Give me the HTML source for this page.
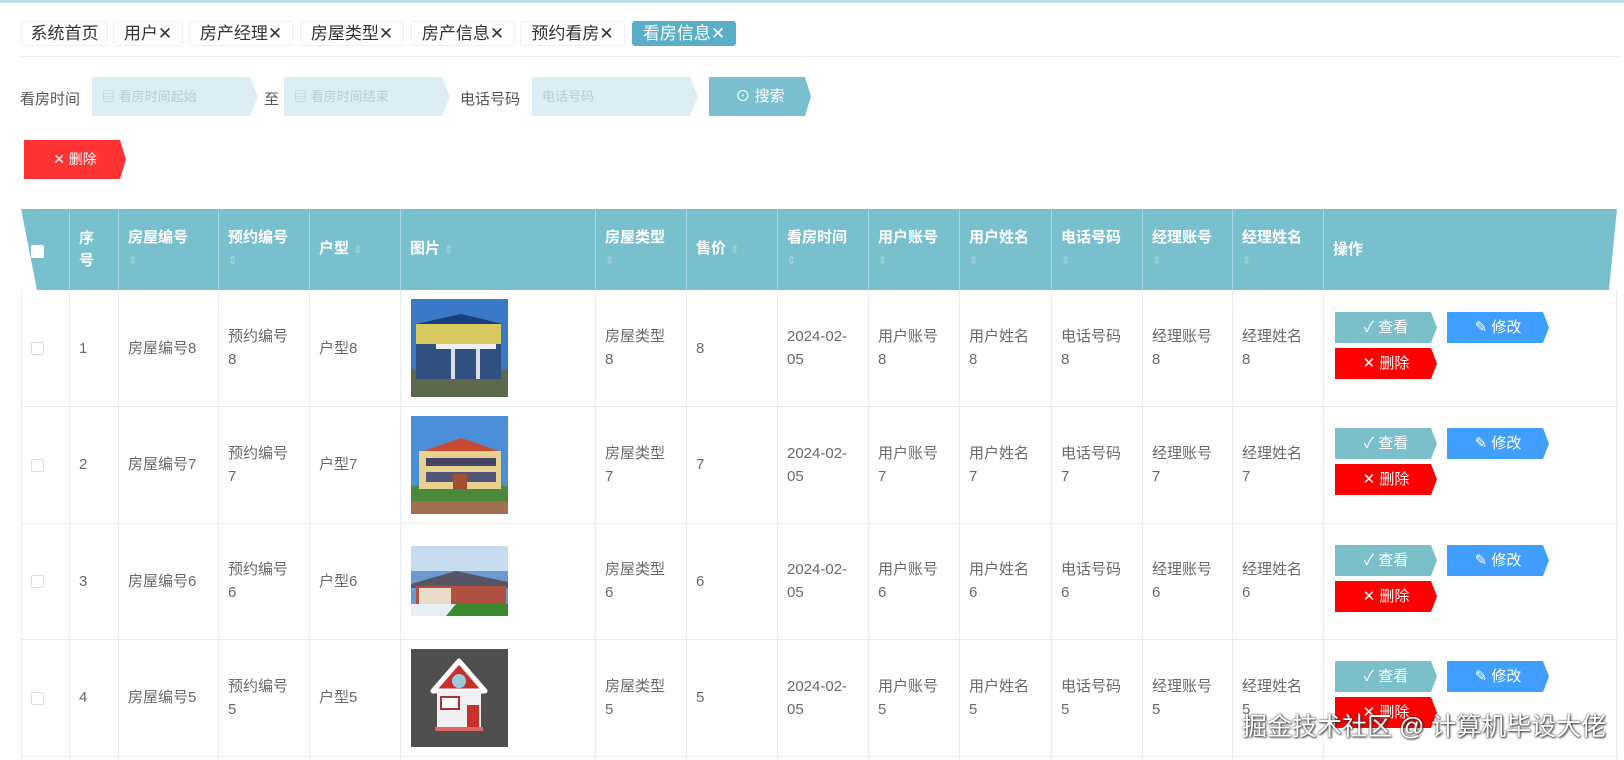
<!DOCTYPE html>
<html><head><meta charset="utf-8"><style>
*{margin:0;padding:0;box-sizing:border-box}
body{width:1624px;height:760px;overflow:hidden;background:#fff;font-family:"Liberation Sans","Noto Sans CJK SC",sans-serif;color:#666;position:relative}
.a{position:absolute}
.topline{left:0;top:0;width:1624px;height:3px;background:#bfe3ec}
.tab{position:absolute;top:21px;height:25px;border:1px solid #eee;border-radius:3px;font-size:17px;line-height:23px;color:#333;text-align:center;background:#fff}
.tab.on{background:#5aafc6;color:#fff;border-color:#5aafc6}
.sep{left:20px;top:56px;width:1600px;height:1px;background:#eee}
.lbl{font-size:15px;color:#555;top:88px}
.inp{top:77px;height:39px;background:#dceef3;clip-path:polygon(0 0,calc(100% - 8px) 0,100% 50%,calc(100% - 8px) 100%,0 100%);font-size:13px;color:#b5cdd4;line-height:39px;padding-left:10px}
.btn{position:absolute;height:31px;color:#fff;font-size:15px;text-align:center;line-height:31px;clip-path:polygon(0 0,calc(100% - 6px) 0,100% 50%,calc(100% - 6px) 100%,0 100%)}
.hdr{left:21px;top:209px;width:1596px;height:81px;background:#79c0cf;clip-path:polygon(0 0,100% 0,calc(100% - 8px) 100%,16px 100%)}
.vl{position:absolute;width:1px;background:#e8eef0}
.hl{position:absolute;left:21px;width:1596px;height:1px;background:#eaeaea}
.th{position:absolute;top:209px;height:81px;color:#fff;font-weight:bold;font-size:15px;line-height:22px;display:flex;align-items:center;padding:0 10px}
.td{position:absolute;font-size:15px;line-height:23px;display:flex;align-items:center;padding:0 10px;color:#6a6a6a}
.s{color:#a8d3dc;font-size:11px;font-weight:normal}
</style></head><body>
<div class="a topline"></div>
<div class="tab" style="left:21px;width:87px">系统首页</div>
<div class="tab" style="left:113px;width:70px">用户✕</div>
<div class="tab" style="left:189px;width:104px">房产经理✕</div>
<div class="tab" style="left:300px;width:104px">房屋类型✕</div>
<div class="tab" style="left:411px;width:104px">房产信息✕</div>
<div class="tab" style="left:520px;width:105px">预约看房✕</div>
<div class="tab on" style="left:632px;width:104px">看房信息✕</div>
<div class="a sep"></div>

<div class="a lbl" style="left:20px">看房时间</div>
<div class="a inp" style="left:92px;width:166px">▤ 看房时间起始</div>
<div class="a lbl" style="left:264px">至</div>
<div class="a inp" style="left:284px;width:166px">▤ 看房时间结束</div>
<div class="a lbl" style="left:460px">电话号码</div>
<div class="a inp" style="left:532px;width:166px">电话号码</div>
<div class="btn" style="left:709px;top:77px;width:102px;height:39px;line-height:39px;background:#79bfcf">⊙ 搜索</div>
<div class="btn" style="left:24px;top:140px;width:102px;height:39px;line-height:39px;background:#f33;font-size:14px">✕ 删除</div>

<div class="a hdr"></div>
<div class="a" style="left:31px;top:245px;width:13px;height:13px;background:#fff;border-radius:2px"></div>
<div id="cols"></div>
<script>
var b=[21,69,118,218,309,400,595,686,777,868,959,1051,1142,1232,1323,1617];
var h=['','序<br>号','房屋编号<br><span class=s>⇕</span>','预约编号<br><span class=s>⇕</span>','户型 <span class=s>⇕</span>','图片 <span class=s>⇕</span>','房屋类型<br><span class=s>⇕</span>','售价 <span class=s>⇕</span>','看房时间<br><span class=s>⇕</span>','用户账号<br><span class=s>⇕</span>','用户姓名<br><span class=s>⇕</span>','电话号码<br><span class=s>⇕</span>','经理账号<br><span class=s>⇕</span>','经理姓名<br><span class=s>⇕</span>','操作'];
var rows=[290,406,523,639,756];
var o='';
for(var i=1;i<15;i++){o+='<div class="th" style="left:'+b[i]+'px;width:'+(b[i+1]-b[i])+'px"><div>'+h[i]+'</div></div>';}
for(var i=1;i<15;i++){o+='<div class="vl" style="left:'+b[i]+'px;top:209px;height:81px;background:#a6d6e0"></div>';o+='<div class="vl" style="left:'+b[i]+'px;top:290px;height:470px"></div>';}
o+='<div class="vl" style="left:21px;top:290px;height:470px"></div><div class="vl" style="left:1616px;top:290px;height:470px"></div>';
for(var r=1;r<5;r++)o+='<div class="hl" style="top:'+rows[r]+'px"></div>';
var n=[8,7,6,5];
var imgs=[
'<svg width="97" height="98"><rect width="97" height="98" fill="#3a78c8"/><rect y="70" width="97" height="28" fill="#5a6a4a"/><polygon points="5,25 50,15 92,25" fill="#1c3f7a"/><rect x="5" y="25" width="85" height="20" fill="#d8c860"/><rect x="5" y="45" width="85" height="35" fill="#2f4f7f"/><rect x="25" y="45" width="60" height="5" fill="#eee"/><rect x="40" y="50" width="4" height="30" fill="#ddd"/><rect x="65" y="50" width="4" height="30" fill="#ddd"/></svg>',
'<svg width="97" height="98"><rect width="97" height="98" fill="#4a8fd8"/><rect y="70" width="97" height="28" fill="#4a8a3a"/><rect y="85" width="97" height="13" fill="#a07050"/><polygon points="12,35 50,22 88,35" fill="#c84a30"/><rect x="8" y="35" width="82" height="38" fill="#e8d090"/><rect x="15" y="42" width="70" height="8" fill="#446"/><rect x="15" y="56" width="70" height="10" fill="#557"/><rect x="42" y="58" width="14" height="15" fill="#a05030"/></svg>',
'<svg width="97" height="70"><rect width="97" height="70" fill="#6a9ad0"/><rect y="0" width="97" height="25" fill="#c8dcf0"/><polygon points="0,38 45,25 97,36 97,42 0,42" fill="#556"/><rect x="5" y="40" width="90" height="22" fill="#b05040"/><rect x="8" y="42" width="32" height="20" fill="#e8dcc8"/><rect y="58" width="97" height="12" fill="#3a8a30"/><polygon points="0,58 45,58 35,70 0,70" fill="#e8eef4"/></svg>',
'<svg width="97" height="98"><rect width="97" height="98" fill="#4f4f4f"/><polygon points="48,12 22,42 74,42" fill="#c8302c" stroke="#fff" stroke-width="5" stroke-linejoin="round"/><circle cx="48" cy="32" r="7" fill="#9cd"/><rect x="26" y="42" width="44" height="36" fill="#f0f0f4"/><rect x="30" y="48" width="18" height="12" fill="#fff" stroke="#a33" stroke-width="2"/><rect x="56" y="56" width="12" height="22" fill="#c8302c"/><rect x="24" y="78" width="48" height="4" fill="#d66"/></svg>'
];
for(var r=0;r<4;r++){
 var t=rows[r],hh=rows[r+1]-t,k=n[r];
 var c=['','',(r+1),'房屋编号'+k,'预约编号<br>'+k,'户型'+k,'',
 '房屋类型<br>'+k,k,'2024-02-<br>05','用户账号<br>'+k,'用户姓名<br>'+k,'电话号码<br>'+k,'经理账号<br>'+k,'经理姓名<br>'+k];
 for(var j=1;j<14;j++){if(j==5)continue;o+='<div class="td" style="left:'+b[j]+'px;top:'+t+'px;width:'+(b[j+1]-b[j])+'px;height:'+hh+'px"><div>'+c[j+1]+'</div></div>';}
 o+='<div class="a" style="left:31px;top:'+(t+hh/2-6)+'px;width:13px;height:13px;border:1px solid #ddd;border-radius:2px"></div>';
 var ih=(r==2?70:98);
 o+='<div class="a" style="left:411px;top:'+(t+(hh-ih)/2)+'px">'+imgs[r]+'</div>';
 var bt=t+22;
 o+='<div class="btn" style="left:1335px;top:'+bt+'px;width:102px;background:#7bbfcb">✓ 查看</div>';
 o+='<div class="btn" style="left:1447px;top:'+bt+'px;width:102px;background:#409eff">✎ 修改</div>';
 o+='<div class="btn" style="left:1335px;top:'+(bt+36)+'px;width:102px;background:#f00">✕ 删除</div>';
}
document.getElementById('cols').innerHTML=o;
</script>
<div class="a" style="left:1242px;top:707px;font-size:25px;color:#fff;text-shadow:1px 1px 2px #333,0 0 2px #333;white-space:nowrap">掘金技术社区 @ 计算机毕设大佬</div>
</body></html>
